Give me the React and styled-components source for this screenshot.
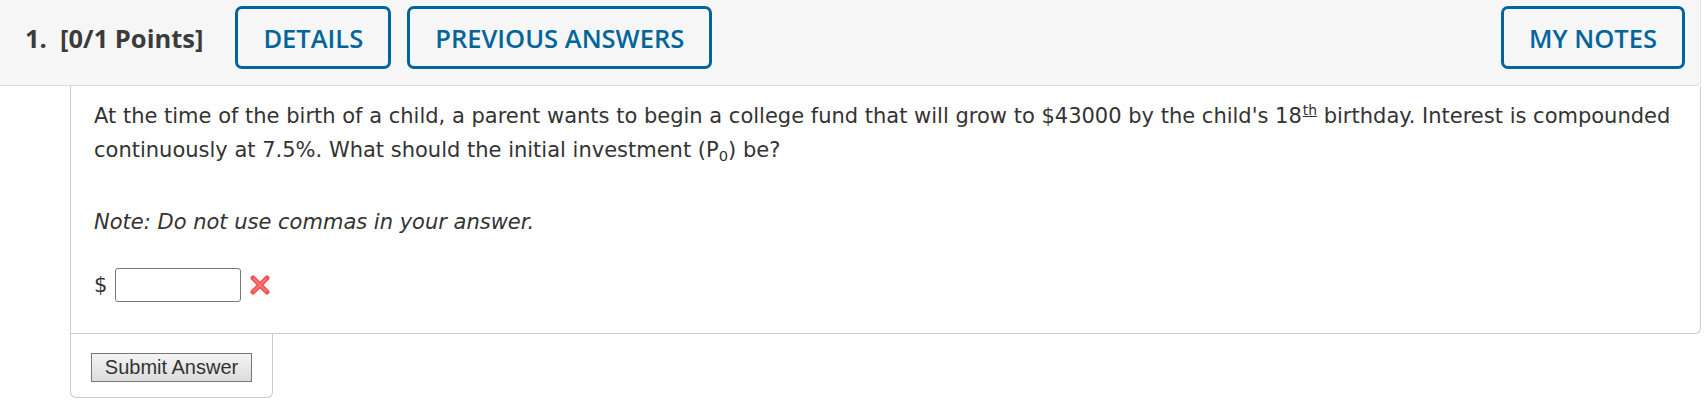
import React from "react";
import styled, { createGlobalStyle } from "styled-components";

const Global = createGlobalStyle`
  html, body { margin: 0; padding: 0; background: #fff; }
  body { font-family: "DejaVu Sans", Verdana, sans-serif; color: #333; }
`;

const Page = styled.div`
  width: 1701px;
`;

const Header = styled.div`
  display: flex;
  align-items: center;
  box-sizing: border-box;
  height: 86px;
  padding: 6px 15px 16px 25px;
  background: #f6f6f6;
  border-bottom: 1px solid #ddd;
  border-right: 1px solid #e4e4e4;
  border-bottom-right-radius: 4px;
`;

const Title = styled.div`
  font-family: "Open Sans", sans-serif;
  font-weight: 700;
  font-size: 25.5px;
  color: #3b3b3b;
  white-space: pre;
  margin-right: 32px;
`;

const NavButton = styled.button`
  box-sizing: border-box;
  height: 63px;
  padding: 0 ${(p) => p.$pad || 25}px;
  margin-right: 16px;
  margin-left: ${(p) => (p.$right ? "auto" : "0")};
  background: transparent;
  border: 3px solid #01659c;
  border-radius: 7px;
  color: #01659c;
  font-family: "Open Sans", sans-serif;
  font-weight: 600;
  font-size: 25.5px;
  cursor: pointer;
  &:last-child { margin-right: 0; }
`;

const Card = styled.div`
  margin-left: 70px;
  box-sizing: border-box;
  padding: 13px 20px 31px 23px;
  border: 1px solid #ccc;
  border-top: none;
  border-bottom-right-radius: 6px;
  font-size: 21px;
  line-height: 34px;
  color: #333;
`;

const Para = styled.p`
  margin: 0 0 ${(p) => p.$gap || 0}px 0;
  font-style: ${(p) => (p.$italic ? "italic" : "normal")};
`;

const Sup = styled.sup`
  font-size: 0.66em;
  line-height: 0;
  text-decoration: underline;
  vertical-align: 0.6em;
  margin-left: 1px;
`;

const Sub = styled.sub`
  font-size: 0.7em;
  line-height: 0;
  vertical-align: -0.25em;
`;

const AnswerRow = styled.div`
  display: flex;
  align-items: center;
  height: 34px;
`;

const Dollar = styled.span`
  margin-right: 8px;
`;

const Input = styled.input`
  box-sizing: border-box;
  width: 126px;
  height: 34px;
  border: 1px solid #777;
  border-radius: 3px;
  background: #fff;
  margin: 0 8px 0 0;
  padding: 0 4px;
`;

const SubmitTab = styled.div`
  margin-left: 70px;
  width: 203px;
  box-sizing: border-box;
  height: 64px;
  padding: 19px 0 0 20px;
  border: 1px solid #ccc;
  border-top: none;
  border-radius: 0 0 6px 6px;
`;

const SubmitButton = styled.button`
  box-sizing: border-box;
  width: 161px;
  height: 29px;
  padding: 0;
  border: 1px solid #777;
  background: linear-gradient(#f4f4f4, #dcdcdc);
  font-family: "Liberation Sans", Arial, sans-serif;
  font-size: 20px;
  color: #333;
  cursor: pointer;
`;

const WrongMark = () => (
  <svg width="22" height="22" viewBox="0 0 22 22">
    <g stroke="#f25555" strokeWidth="5" strokeLinecap="round">
      <line x1="4" y1="4" x2="18" y2="18" />
      <line x1="18" y1="4" x2="4" y2="18" />
    </g>
    <g stroke="#ff7b7b" strokeWidth="1.5" strokeLinecap="round">
      <line x1="5" y1="5" x2="17" y2="17" />
      <line x1="17" y1="5" x2="5" y2="17" />
    </g>
  </svg>
);

export default function App() {
  return (
    <Page>
      <Global />
      <Header>
        <Title>{"1.  [0/1 Points]"}</Title>
        <NavButton>DETAILS</NavButton>
        <NavButton>PREVIOUS ANSWERS</NavButton>
        <NavButton $right>MY NOTES</NavButton>
      </Header>
      <Card>
        <Para $gap={38}>
          At the time of the birth of a child, a parent wants to begin a college fund that will grow to $43000 by the child's 18
          <Sup>th</Sup> birthday. Interest is compounded continuously at 7.5%. What should the initial investment (P
          <Sub>0</Sub>) be?
        </Para>
        <Para $italic $gap={29}>Note: Do not use commas in your answer.</Para>
        <AnswerRow>
          <Dollar>$</Dollar>
          <Input type="text" />
          <WrongMark />
        </AnswerRow>
      </Card>
      <SubmitTab>
        <SubmitButton>Submit Answer</SubmitButton>
      </SubmitTab>
    </Page>
  );
}
